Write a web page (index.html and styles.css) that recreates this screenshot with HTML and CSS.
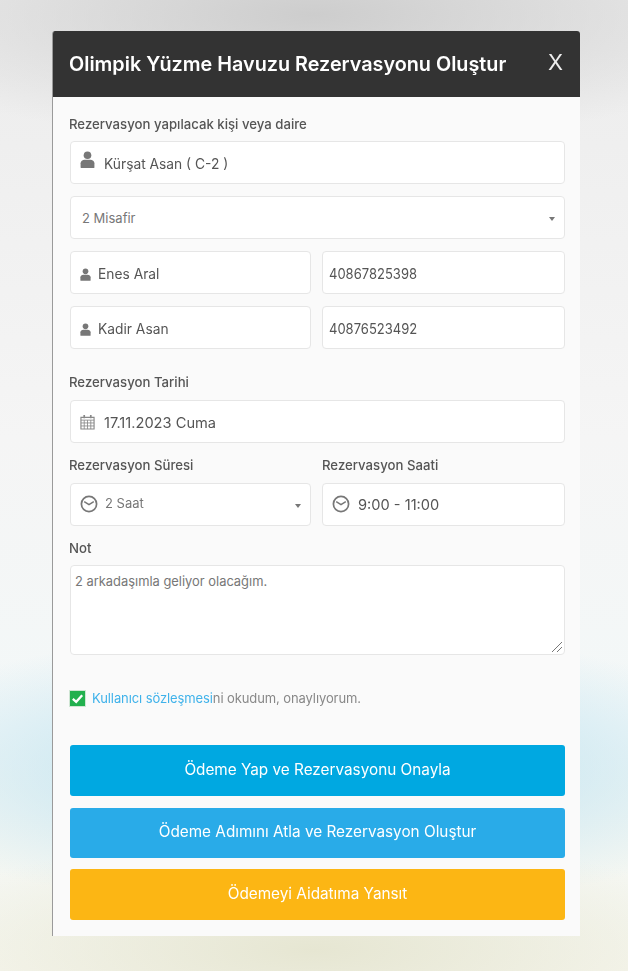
FILE: index.html
```html
<!DOCTYPE html>
<html lang="tr">
<head>
<meta charset="utf-8">
<title>Rezervasyon</title>
<link rel="stylesheet" href="styles.css">
</head>
<body>
<svg class="defs" width="0" height="0" aria-hidden="true">
  <symbol id="user" viewBox="0 0 14 16"><circle cx="7" cy="4" r="3.6"/><path d="M0.5 15.2V11.6C0.5 9.3 2.4 8.2 4.2 8.2H9.8C11.6 8.2 13.5 9.3 13.5 11.6V15.2C13.5 15.7 13.2 16 12.7 16H1.3C0.8 16 0.5 15.7 0.5 15.2Z"/></symbol>
  <symbol id="clock" viewBox="0 0 18 18"><circle cx="9" cy="9" r="7.6" fill="none" stroke="currentColor" stroke-width="1.7"/><path d="M4.2 6.6L9 9.6L13.8 6.6" fill="none" stroke="currentColor" stroke-width="1.5"/></symbol>
  <symbol id="cal" viewBox="0 0 16 17"><path d="M1 3.5H15V16H1Z" fill="none" stroke="currentColor" stroke-width="1.2"/><path d="M1 6.5H15M1 9.5H15M1 12.7H15M4.5 6.5V16M8 6.5V16M11.5 6.5V16" fill="none" stroke="currentColor" stroke-width="0.9"/><path d="M4.5 1V4.5M11.5 1V4.5" fill="none" stroke="currentColor" stroke-width="1.8"/></symbol>
</svg>
<main class="modal">
  <header class="modal-head">
    <h1>Olimpik Yüzme Havuzu Rezervasyonu Oluştur</h1>
    <span class="close">X</span>
  </header>
  <form class="modal-body">
    <label class="lbl first">Rezervasyon yapılacak kişi veya daire</label>
    <div class="field main-person">
      <svg class="ic ic-user-lg"><use href="#user"/></svg>
      <span class="val">Kürşat Asan ( C-2 )</span>
    </div>
    <div class="field select guest">
      <span class="sel-text">2 Misafir</span>
      <span class="caret"></span>
    </div>
    <div class="two pair">
      <div class="field"><svg class="ic ic-user-sm"><use href="#user"/></svg><span class="val">Enes Aral</span></div>
      <div class="field num"><span class="val digits">40867825398</span></div>
    </div>
    <div class="two pair">
      <div class="field"><svg class="ic ic-user-sm"><use href="#user"/></svg><span class="val">Kadir Asan</span></div>
      <div class="field num"><span class="val digits">40876523492</span></div>
    </div>
    <label class="lbl date-lbl">Rezervasyon Tarihi</label>
    <div class="field">
      <svg class="ic ic-cal"><use href="#cal"/></svg>
      <span class="val wide">17.11.2023 Cuma</span>
    </div>
    <div class="two time-row">
      <div>
        <label class="lbl">Rezervasyon Süresi</label>
        <div class="field select">
          <svg class="ic ic-clock"><use href="#clock"/></svg>
          <span class="sel-text time-sel">2 Saat</span>
          <span class="caret"></span>
        </div>
      </div>
      <div>
        <label class="lbl lbl-right">Rezervasyon Saati</label>
        <div class="field">
          <svg class="ic ic-clock"><use href="#clock"/></svg>
          <span class="val wide">9:00 - 11:00</span>
        </div>
      </div>
    </div>
    <label class="lbl note-lbl">Not</label>
    <div class="note">
      <span>2 arkadaşımla geliyor olacağım.</span>
      <svg class="grip" viewBox="0 0 12 12"><path d="M1 11L11 1M6 11L11 6" stroke="#777" stroke-width="1" fill="none"/></svg>
    </div>
    <div class="agree">
      <span class="check"><svg viewBox="0 0 16 16"><path d="M3 8.4L6.6 11.6L13 4.6" fill="none" stroke="#fff" stroke-width="2.4"/></svg></span>
      <span><a class="link">Kullanıcı sözleşmesi</a>ni okudum, onaylıyorum.</span>
    </div>
    <button type="button" class="btn b1">Ödeme Yap ve Rezervasyonu Onayla</button>
    <button type="button" class="btn b2">Ödeme Adımını Atla ve Rezervasyon Oluştur</button>
    <button type="button" class="btn b3">Ödemeyi Aidatıma Yansıt</button>
  </form>
</main>
</body>
</html>
```
FILE: styles.css
```css
html, body { margin: 0; height: 971px; overflow: hidden; }
body {
  font-family: Inter, "Liberation Sans", sans-serif;
  background:
    radial-gradient(ellipse 430px 115px at 314px 950px, #e6e6d2 0%, rgba(236,236,220,0) 100%),
    radial-gradient(ellipse 480px 140px at 314px 770px, #b4deee 0%, rgba(205,232,242,0) 100%),
    radial-gradient(ellipse 480px 130px at 314px 15px, #cdcdcd 0%, rgba(210,210,210,0) 100%),
    linear-gradient(180deg, #ececec 0%, #f5f5f5 45%, #f3f8f8 75%, #f6f6ee 100%);
  padding-top: 31px;
  box-sizing: border-box;
}
.defs { position: absolute; }
.modal {
  width: 528px;
  height: 905px;
  margin-left: 52px;
  background: #fafafa;
  border-left: 1px solid #9a9a9a;
  box-sizing: border-box;
  border-radius: 3px 3px 0 0;
  overflow: hidden;
  filter: blur(0.6px);
}
.modal-head {
  height: 66px;
  background: #333;
  color: #fff;
  display: flex;
  align-items: center;
  justify-content: space-between;
  padding: 0 17px 0 16px;
}
.modal-head h1 { margin: 0; font-size: 19.8px; font-weight: 600; white-space: nowrap; }
.close { font-size: 22px; color: #eee; margin-top: -4px; }
.modal-body { display: flex; flex-direction: column; padding: 0 15px 0 17px; }
.lbl { display: block; font-size: 13.2px; font-weight: 500; color: #555; line-height: 16px; height: 16px; margin-left: -1px; white-space: nowrap; }
.lbl-right { margin-left: 0; }
.lbl.first { margin-top: 19px; margin-bottom: 9px; }
.field {
  height: 43px;
  background: #fff;
  border: 1px solid #e6e6e6;
  border-radius: 4px;
  box-sizing: border-box;
  display: flex;
  align-items: center;
  padding: 0 9px;
  color: #555;
}
.num { padding-left: 6px; }
.val { font-size: 14px; transform: scaleX(0.985); transform-origin: left center; white-space: nowrap; color: #555; }
.digits { transform: scaleX(0.93); }
.wide { transform: scaleX(1.045); }
.pair .val { margin-top: 2px; }
.sel-text { font-size: 13px; color: #777; white-space: nowrap; }
.time-sel { margin-left: -1px; margin-top: -3px; }
.ic { fill: #777; color: #777; flex: none; }
.ic-user-lg { width: 15px; height: 17px; margin-right: 9px; margin-top: -7px; }
.ic-user-sm { width: 11px; height: 13px; margin-right: 7px; margin-top: 3px; }
.ic-cal { width: 15px; height: 16px; margin-right: 9px; color: #888; fill: none; }
.ic-clock { width: 18px; height: 18px; margin-right: 8px; margin-top: -2px; }
.main-person .val { margin-top: 1px; }
.select { position: relative; }
.guest { padding-left: 11px; margin-top: 12px; }
.caret {
  position: absolute; right: 9px; top: 50%; margin-top: -1px;
  border-left: 3.5px solid transparent; border-right: 3.5px solid transparent; border-top: 4px solid #777;
}
.two { display: grid; grid-template-columns: 240.5px 243px; column-gap: 11.5px; }
.pair { margin-top: 12px; }
.date-lbl { margin-top: 25px; margin-bottom: 10px; }
.date-lbl + .field .val { margin-top: 1px; }
.time-row { margin-top: 14px; }
.time-row .lbl { margin-bottom: 10px; }
.note-lbl { margin-top: 14px; margin-bottom: 9px; }
.note {
  position: relative;
  height: 90px;
  background: #fff;
  border: 1px solid #e6e6e6;
  border-radius: 4px;
  box-sizing: border-box;
  padding: 8px 4px;
  font-size: 12.9px;
  line-height: 16px;
  color: #777;
}
.grip { position: absolute; right: 1px; bottom: 1px; width: 12px; height: 12px; }
.agree {
  display: flex; align-items: center; gap: 6px;
  margin-top: 35px;
  margin-left: -1px;
  font-size: 13px; color: #888; line-height: 17px;
  letter-spacing: -0.1px;
  white-space: nowrap;
}
.check { width: 17px; height: 17px; background: #22b04e; border: 1px solid #cfe6d4; box-sizing: border-box; display: block; flex: none; }
.check svg { display: block; width: 15px; height: 15px; }
.link { color: #3fb2ea; }
.btn {
  display: block; width: 100%; border: 0; border-radius: 3px;
  color: #fff; font: 400 15.3px/1 Inter, "Liberation Sans", sans-serif;
  padding: 0 0 2px;
}
.b1 { background: #00a8e1; height: 51px; margin-top: 38px; }
.b2 { background: #29abe8; height: 50px; margin-top: 12px; }
.b3 { background: #fcb614; height: 51px; margin-top: 11px; }
```
